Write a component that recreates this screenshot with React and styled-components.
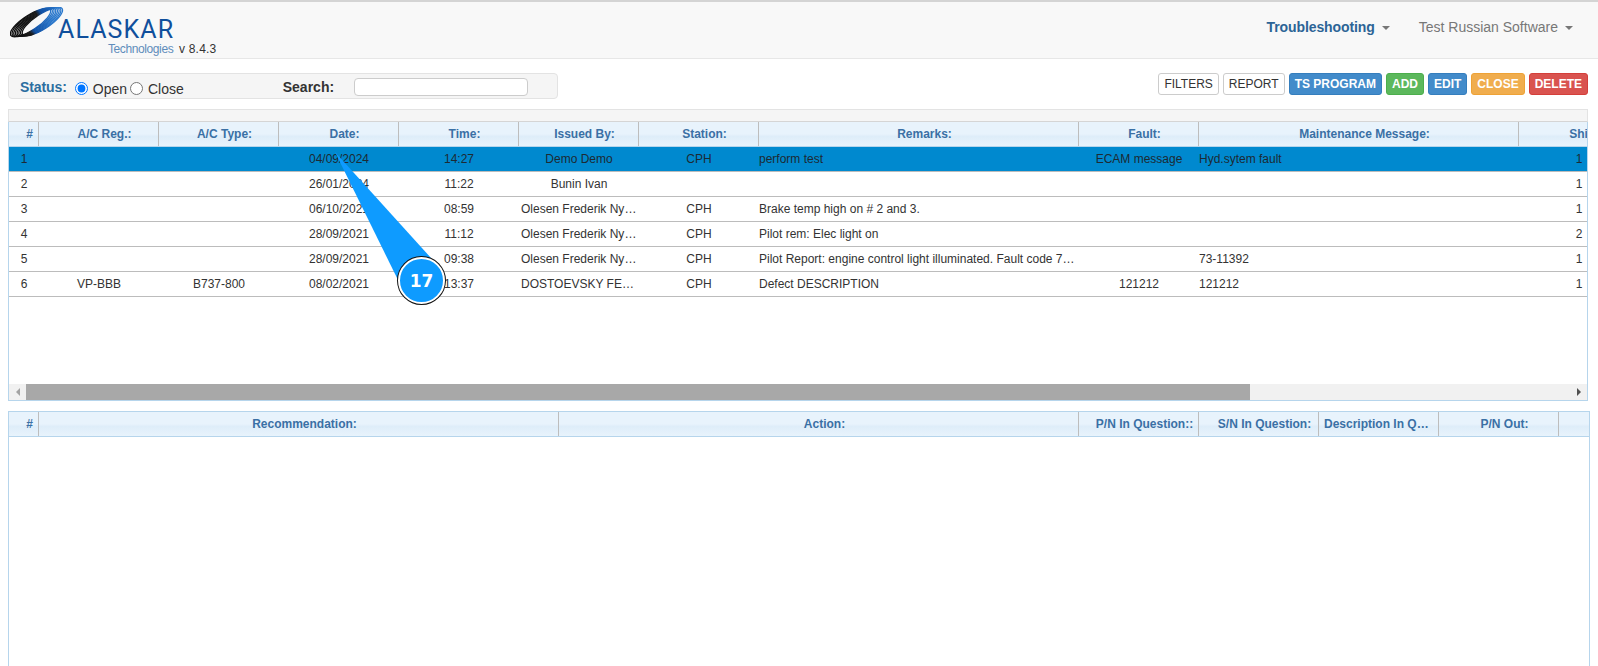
import React from "react";
import styled, { createGlobalStyle } from "styled-components";

const Global = createGlobalStyle`
  html, body { margin: 0; padding: 0; height: 100%; overflow: hidden; background: #fff; }
  body { font-family: "Liberation Sans", Arial, sans-serif; font-size: 12px; color: #333; }
`;

const Page = styled.div`
  position: relative;
  width: 1598px;
  height: 666px;
  overflow: hidden;
`;

const Navbar = styled.header`
  box-sizing: border-box;
  height: 59px;
  background: #f8f8f8;
  border-top: 2px solid #d4d4d4;
  border-bottom: 1px solid #e7e7e7;
  display: flex;
  align-items: flex-start;
  justify-content: space-between;
`;

const Brand = styled.div`
  display: flex;
  flex-direction: column;
  padding: 5px 0 0 10px;
`;

const BrandTop = styled.div`
  display: flex;
  align-items: flex-end;
  height: 32px;
`;

const Wordmark = styled.span`
  font-family: Roboto, "Liberation Sans", sans-serif;
  font-size: 25px;
  line-height: 25px;
  letter-spacing: 1.1px;
  color: #0f4f9c;
  margin-left: -6px;
  margin-bottom: -3px;
  font-weight: 400;
`;

const BrandSub = styled.div`
  display: flex;
  align-items: baseline;
  padding-left: 98px;
  margin-top: 3px;
`;

const SubName = styled.span`
  font-size: 12px;
  color: #5f8dbb;
  letter-spacing: -0.4px;
  width: 71px;
`;

const Version = styled.span`
  font-size: 12px;
  color: #333;
  letter-spacing: 0.2px;
`;

const NavMenu = styled.nav`
  display: flex;
  align-items: center;
  height: 50px;
  padding-right: 25px;
  gap: 29px;
`;

const NavItem = styled.span`
  display: flex;
  align-items: center;
  gap: 7px;
  font-size: 14px;
  font-weight: ${(p) => (p.$active ? 700 : 400)};
  letter-spacing: ${(p) => (p.$active ? "-0.1px" : "0")};
  color: ${(p) => (p.$active ? "#2c6496" : "#777")};
`;

const Caret = styled.i`
  display: block;
  width: 0;
  height: 0;
  border-left: 4px solid transparent;
  border-right: 4px solid transparent;
  border-top: 4px solid #777;
  margin-top: 2px;
`;

const ToolRow = styled.div`
  display: flex;
  justify-content: space-between;
  align-items: flex-start;
  padding: 14px 10px 0 8px;
  height: 36px;
`;

const StatusBar = styled.div`
  box-sizing: border-box;
  width: 550px;
  height: 26px;
  background: #f5f5f5;
  border: 1px solid #e3e3e3;
  border-radius: 4px;
  display: flex;
  align-items: center;
  padding-left: 11px;
  font-size: 14px;
`;

const StatusLabel = styled.b`
  color: #2c6ea0;
  margin-top: 2px;
  letter-spacing: -0.1px;
`;

const RadioLabel = styled.label`
  display: flex;
  align-items: center;
  gap: 5px;
  color: #333;
`;

const Radio = styled.input`
  width: 13px;
  height: 13px;
  margin: -2px 0 0;
  accent-color: #0075ff;
`;

const StatusGroup = styled.div`
  display: flex;
  align-items: center;
  gap: 3px;
  margin: 6px 0 0 8px;
  width: 208px;
`;

const SearchLabel = styled.b`
  color: #333;
  width: 71px;
  margin-top: 2px;
`;

const SearchInput = styled.input`
  box-sizing: border-box;
  width: 174px;
  height: 18px;
  border: 1px solid #ccc;
  border-radius: 4px;
  background: #fff;
  padding: 0 4px;
  margin-top: 1px;
`;

const Buttons = styled.div`
  display: flex;
  gap: 4px;
`;

const palette = {
  plain: ["#fff", "#ccc", "#333"],
  primary: ["#428bca", "#357ebd", "#fff"],
  success: ["#5cb85c", "#4cae4c", "#fff"],
  warning: ["#f0ad4e", "#eea236", "#fff"],
  danger: ["#d9534f", "#d43f3a", "#fff"],
};

const Btn = styled.button`
  box-sizing: border-box;
  height: 22px;
  padding: 0 5px;
  border-radius: 3px;
  font-family: inherit;
  font-size: 12px;
  font-weight: ${(p) => (p.$tone === "plain" ? 400 : 700)};
  background: ${(p) => palette[p.$tone][0]};
  border: 1px solid ${(p) => palette[p.$tone][1]};
  color: ${(p) => palette[p.$tone][2]};
`;

const Panel = styled.section`
  margin: 0 ${(p) => p.$right}px 0 8px;
  height: ${(p) => p.$height}px;
  box-sizing: border-box;
  display: flex;
  flex-direction: column;
  overflow: hidden;
`;

const Strip = styled.div`
  flex: none;
  height: 11px;
  background: #f5f5f5;
  border: 1px solid #e3e3e3;
  border-bottom: 1px solid #d5d5d5;
`;

const GridFrame = styled.div`
  flex: 1;
  min-height: 0;
  display: flex;
  flex-direction: column;
  border-left: 1px solid #b6d5ec;
  border-right: 1px solid #b6d5ec;
  border-bottom: 1px solid #b6d5ec;
  border-top: ${(p) => (p.$topLine ? "1px solid #b6d5ec" : "0")};
  overflow: hidden;
`;

const HeadRow = styled.div`
  flex: none;
  display: grid;
  grid-template-columns: ${(p) => p.$cols};
  width: max-content;
  height: 25px;
  box-sizing: border-box;
  background: linear-gradient(#e8f3fc 0, #e8f3fc 50%, #deedf9 60%, #e8f3fc 100%);
  border-bottom: 1px solid #b6d5ec;
`;

const HeadCell = styled.div`
  box-sizing: border-box;
  padding: 0 ${(p) => (p.$clip ? 4 : 0)}px 0 ${(p) => (p.$clip ? 5 : 12)}px;
  border-right: 1px solid #bdbdbd;
  text-align: center;
  font-weight: 700;
  font-size: 12px;
  line-height: 24px;
  color: #3a70a5;
  white-space: nowrap;
  overflow: hidden;
  text-overflow: ellipsis;
`;

const BodyRow = styled.div`
  flex: none;
  display: grid;
  grid-template-columns: ${(p) => p.$cols};
  width: max-content;
  height: 25px;
  box-sizing: border-box;
  border-bottom: 1px solid #bcbcbc;
  background: ${(p) => (p.$selected ? "#0089cf" : "#fff")};
  ${(p) => p.$selected && "color: #1d2a33;"}
`;

const Cell = styled.div`
  box-sizing: border-box;
  padding: 0 2px 0 ${(p) => (p.$left ? 0 : 2)}px;
  text-align: ${(p) => (p.$left ? "left" : "center")};
  line-height: 24px;
  white-space: nowrap;
  overflow: hidden;
  text-overflow: ellipsis;
`;

const RowsArea = styled.div`
  flex: 1;
  min-height: 0;
`;

const Scrollbar = styled.div`
  flex: none;
  height: 16px;
  background: #f1f1f1;
  display: flex;
  align-items: stretch;
`;

const ScrollArrow = styled.span`
  flex: none;
  width: 17px;
  display: flex;
  align-items: center;
  justify-content: center;
`;

const Track = styled.div`
  flex: 1;
`;

const Thumb = styled.div`
  width: 1224px;
  height: 100%;
  background: #a8a8a8;
`;

const Gap = styled.div`
  height: 10px;
`;

const Callout = styled.div`
  position: absolute;
  left: 330px;
  top: 148px;
  width: 120px;
  height: 160px;
  pointer-events: none;
`;

const CalloutBadge = styled.div`
  position: absolute;
  left: 68px;
  top: 109px;
  box-sizing: border-box;
  width: 47px;
  height: 47px;
  border-radius: 50%;
  background: #0e9bff;
  border: 2px solid #fff;
  box-shadow: 0 0 0 1px #111;
  display: flex;
  align-items: center;
  justify-content: center;
  color: #fff;
  font-family: "DejaVu Sans", sans-serif;
  font-weight: 700;
  font-size: 17px;
`;

const topCols = "30px 120px 120px 120px 120px 120px 120px 320px 120px 320px 120px";
const botCols = "30px 520px 520px 120px 120px 120px 120px 120px";

const topHead = ["#", "A/C Reg.:", "A/C Type:", "Date:", "Time:", "Issued By:", "Station:", "Remarks:", "Fault:", "Maintenance Message:", "Shift:"];
const botHead = ["#", "Recommendation:", "Action:", "P/N In Question::", "S/N In Question:", "Description In Question:", "P/N Out:", "S/N Out:"];

const rows = [
  ["1", "", "", "04/09/2024", "14:27", "Demo Demo", "CPH", "perform test", "ECAM message", "Hyd.sytem fault", "1"],
  ["2", "", "", "26/01/2024", "11:22", "Bunin Ivan", "", "", "", "", "1"],
  ["3", "", "", "06/10/2021", "08:59", "Olesen Frederik Nygaard", "CPH", "Brake temp high on # 2 and 3.", "", "", "1"],
  ["4", "", "", "28/09/2021", "11:12", "Olesen Frederik Nygaard", "CPH", "Pilot rem: Elec light on", "", "", "2"],
  ["5", "", "", "28/09/2021", "09:38", "Olesen Frederik Nygaard", "CPH", "Pilot Report: engine control light illuminated. Fault code 73-11392 displayed", "", "73-11392", "1"],
  ["6", "VP-BBB", "B737-800", "08/02/2021", "13:37", "DOSTOEVSKY FEDOR", "CPH", "Defect DESCRIPTION", "121212", "121212", "1"],
];

const leftCols = new Set([7, 9]);

const Swoosh = () => {
  const rings = [0, 1, 2, 3, 4, 5, 6, 7];
  return (
    <svg width="54" height="32" viewBox="0 0 54 32" aria-hidden="true">
      <defs>
        <linearGradient id="sw" gradientUnits="userSpaceOnUse" x1="12" y1="4" x2="34" y2="28">
          <stop offset="0" stopColor="#0c0c0c" />
          <stop offset="0.47" stopColor="#1a1a1a" />
          <stop offset="0.57" stopColor="#0f4fa3" />
          <stop offset="1" stopColor="#2a78cc" />
        </linearGradient>
      </defs>
      {rings.map((i) => {
        const cx = 20.5 + i * 1.7;
        const cy = 15.5 - i * 0.14;
        return (
          <ellipse
            key={i}
            cx={cx}
            cy={cy}
            rx="23.5"
            ry="7.5"
            transform={`rotate(-33 ${cx} ${cy})`}
            fill="none"
            stroke="url(#sw)"
            strokeWidth="1.3"
          />
        );
      })}
    </svg>
  );
};

const Arrow = ({ dir }) => (
  <svg width="6" height="8" viewBox="0 0 6 8" aria-hidden="true">
    <path d={dir === "left" ? "M5 0 L1 4 L5 8 Z" : "M1 0 L5 4 L1 8 Z"} fill={dir === "left" ? "#a3a3a3" : "#505050"} />
  </svg>
);

export default function App() {
  return (
    <Page>
      <Global />
      <Navbar>
        <Brand>
          <BrandTop>
            <Swoosh />
            <Wordmark>ALASKAR</Wordmark>
          </BrandTop>
          <BrandSub>
            <SubName>Technologies</SubName>
            <Version>v 8.4.3</Version>
          </BrandSub>
        </Brand>
        <NavMenu>
          <NavItem $active>Troubleshooting <Caret /></NavItem>
          <NavItem>Test Russian Software <Caret /></NavItem>
        </NavMenu>
      </Navbar>

      <ToolRow>
        <StatusBar>
          <StatusLabel>Status:</StatusLabel>
          <StatusGroup>
            <RadioLabel><Radio type="radio" name="st" defaultChecked /> Open</RadioLabel>
            <RadioLabel><Radio type="radio" name="st" /> Close</RadioLabel>
          </StatusGroup>
          <SearchLabel>Search:</SearchLabel>
          <SearchInput />
        </StatusBar>
        <Buttons>
          <Btn $tone="plain">FILTERS</Btn>
          <Btn $tone="plain">REPORT</Btn>
          <Btn $tone="primary">TS PROGRAM</Btn>
          <Btn $tone="success">ADD</Btn>
          <Btn $tone="primary">EDIT</Btn>
          <Btn $tone="warning">CLOSE</Btn>
          <Btn $tone="danger">DELETE</Btn>
        </Buttons>
      </ToolRow>

      <Panel $right={10} $height={292}>
        <Strip />
        <GridFrame>
          <HeadRow $cols={topCols}>
            {topHead.map((h) => <HeadCell key={h}>{h}</HeadCell>)}
          </HeadRow>
          <RowsArea>
            {rows.map((r, idx) => (
              <BodyRow key={r[0]} $cols={topCols} $selected={idx === 0}>
                {r.map((c, i) => <Cell key={i} $left={leftCols.has(i)}>{c}</Cell>)}
              </BodyRow>
            ))}
          </RowsArea>
          <Scrollbar>
            <ScrollArrow><Arrow dir="left" /></ScrollArrow>
            <Track><Thumb /></Track>
            <ScrollArrow><Arrow dir="right" /></ScrollArrow>
          </Scrollbar>
        </GridFrame>
      </Panel>

      <Gap />

      <Panel $right={8} $height={300}>
        <GridFrame $topLine>
          <HeadRow $cols={botCols}>
            {botHead.map((h) => <HeadCell key={h} $clip={h.startsWith("Description")}>{h}</HeadCell>)}
          </HeadRow>
        </GridFrame>
      </Panel>

      <Callout>
        <svg width="120" height="160" viewBox="0 0 120 160" aria-hidden="true">
          <path d="M5 4 L101 110 L68 132 Z" fill="#0e9bff" />
        </svg>
        <CalloutBadge>17</CalloutBadge>
      </Callout>
    </Page>
  );
}
